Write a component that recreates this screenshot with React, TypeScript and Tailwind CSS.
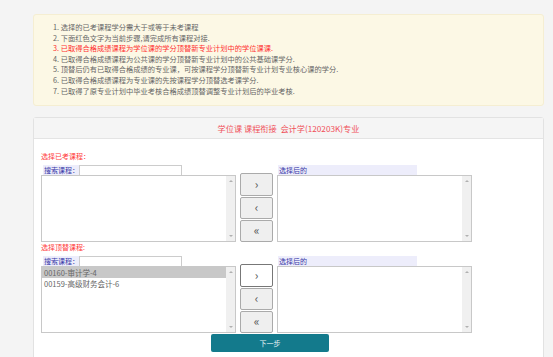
import React from "react";

const notes = [
  { t: "1. 选择的已考课程学分需大于或等于未考课程", red: false },
  { t: "2. 下面红色文字为当前步骤,请完成所有课程对接.", red: false },
  { t: "3. 已取得合格成绩课程为学位课的学分顶替新专业计划中的学位课课.", red: true },
  { t: "4. 已取得合格成绩课程为公共课的学分顶替新专业计划中的公共基础课学分.", red: false },
  { t: "5. 顶替后仍有已取得合格成绩的专业课，可按课程学分顶替新专业计划专业核心课的学分.", red: false },
  { t: "6. 已取得合格成绩课程为专业课的先按课程学分顶替选考课学分.", red: false },
  { t: "7. 已取得了原专业计划中毕业考核合格成绩顶替调整专业计划后的毕业考核.", red: false },
];

function Scrollbar() {
  return (
    <div className="w-[9px] h-full bg-[#f0f0f0] flex flex-col items-center justify-between py-[4px]">
      <div className="w-0 h-0 border-l-[2px] border-r-[2px] border-b-[2px] border-l-transparent border-r-transparent border-b-[#b0b0b0]" />
      <div className="w-0 h-0 border-l-[2px] border-r-[2px] border-t-[2px] border-l-transparent border-r-transparent border-t-[#b0b0b0]" />
    </div>
  );
}

function ListBox({ h, items }: { h: string; items?: { t: string; sel?: boolean }[] }) {
  return (
    <div className={`w-full ${h} border border-[#c8c8c8] bg-white flex`}>
      <div className="flex-1 flex flex-col">
        {items?.map((it) => (
          <div
            key={it.t}
            className={`h-[11px] leading-[11px] text-[7.5px] pl-[2px] text-[#666] ${it.sel ? "bg-[#c8c8c8]" : ""}`}
          >
            {it.t}
          </div>
        ))}
      </div>
      <Scrollbar />
    </div>
  );
}

function Btn({ label, focus, h }: { label: string; focus?: boolean; h: string }) {
  return (
    <div
      className={`w-[33px] ${h} flex items-center justify-center rounded-[2px] border text-[12px] leading-none text-[#555] ${
        focus ? "bg-white border-[#777]" : "bg-[#efefef] border-[#aaa]"
      }`}
    >
      <span className="-mt-[2px]">{label}</span>
    </div>
  );
}

function Row({ listH, items, focusFirst }: { listH: string; items?: { t: string; sel?: boolean }[]; focusFirst?: boolean }) {
  return (
    <div className="flex items-end gap-[4px]">
      <div className="w-[195px] flex flex-col">
        <div className="flex h-[10px] ml-[2px]">
          <div className="w-[36px] h-[10px] bg-[#ededfb] text-[#3838a8] text-[7px] leading-[10px] pl-[1px]">搜索课程：</div>
          <div className="w-[103px] h-[10px] border border-[#ccc] border-b-0 bg-white" />
        </div>
        <ListBox h={listH} items={items} />
      </div>
      <div className="flex flex-col gap-[1px]">
        <Btn label="›" focus={focusFirst} h="h-[23px]" />
        <Btn label="‹" h="h-[22px]" />
        <Btn label="«" h="h-[22px]" />
      </div>
      <div className="w-[195px] flex flex-col">
        <div className="h-[10px] w-[139px] ml-[1px] bg-[#ededfb] text-[#3838a8] text-[7px] leading-[10px] pl-[1px]">选择后的</div>
        <ListBox h={listH} />
      </div>
    </div>
  );
}

export default function App() {
  return (
    <div className="w-[553px] h-[357px] overflow-hidden bg-[#f4f4f4] pt-[14px] pl-[33px] pr-[9px] font-['Noto_Sans_CJK_SC','Microsoft_YaHei',sans-serif]">
      <div className="h-[92px] rounded-[3px] border border-[#f5eed2] bg-[#fcf8e5] pl-[19px] pt-[7px]">
        {notes.map((n) => (
          <div
            key={n.t}
            className={`text-[7.25px] leading-[10.6px] whitespace-nowrap ${n.red ? "text-[#ff3030]" : "text-[#666]"}`}
          >
            {n.t}
          </div>
        ))}
      </div>
      <div className="mt-[11px] h-[260px] rounded-t-[3px] border border-[#e2e2e2] bg-white flex flex-col">
        <div className="h-[21px] bg-[#f5f5f5] border-b border-[#e4e4e4] flex items-center justify-center text-[8.2px] text-[#f0505a] whitespace-pre">
          学位课 课程衔接  会计学(120203K)专业
        </div>
        <div className="pl-[7px] pt-[12px] flex flex-col">
          <div className="h-[10px] leading-[10px] text-[7px] text-[#ff3b3b]">选择已考课程：</div>
          <div className="mt-[4px]">
            <Row listH="h-[67px]" />
          </div>
          <div className="h-[10px] leading-[10px] text-[7px] text-[#ff3b3b]">选择顶替课程:</div>
          <div className="mt-[4px]">
            <Row
              listH="h-[67px]"
              focusFirst
              items={[{ t: "00160-审计学-4", sel: true }, { t: "00159-高级财务会计-6" }]}
            />
          </div>
          <div className="ml-[170px] mt-[1px] w-[118px] h-[18px] rounded-[2px] bg-[#137a8c] flex items-center justify-center text-[7px] text-[#e8f4f6]">
            下一步
          </div>
        </div>
      </div>
    </div>
  );
}
